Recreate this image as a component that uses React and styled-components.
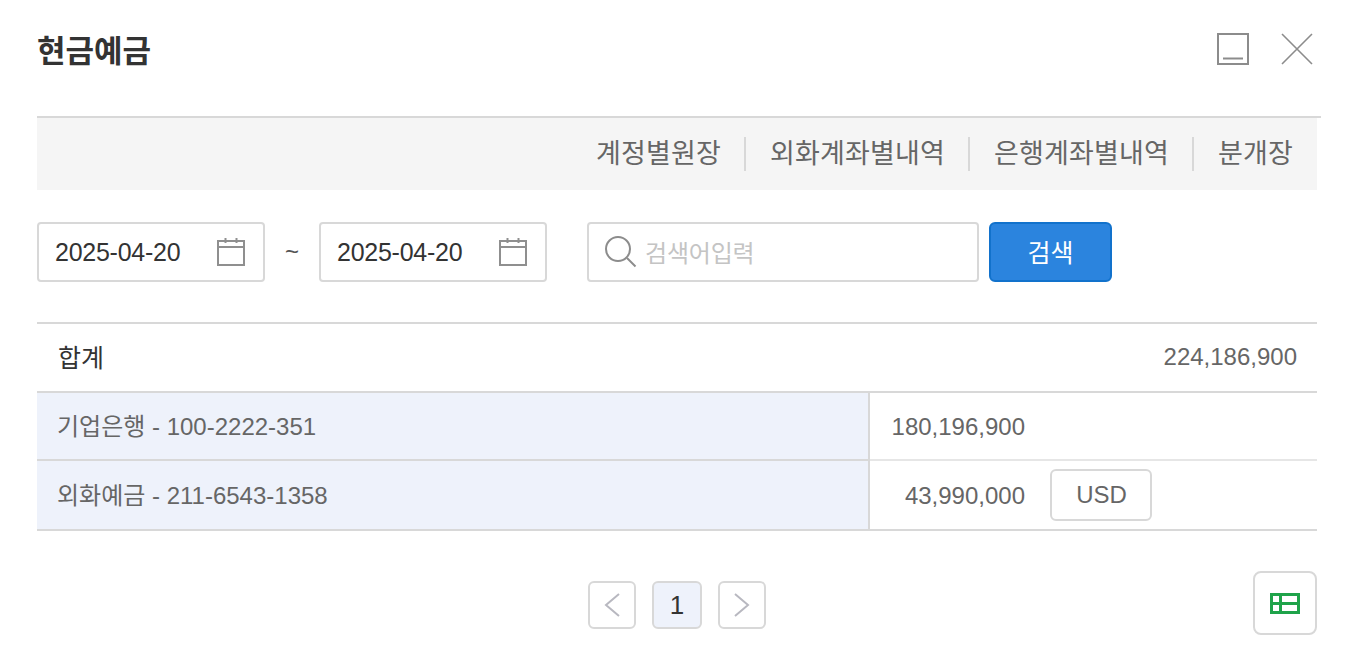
import React from "react";
import styled, { createGlobalStyle } from "styled-components";

const FONT = `"Liberation Sans", "Noto Sans CJK KR", sans-serif`;

const GlobalStyle = createGlobalStyle`
  html, body {
    margin: 0;
    padding: 0;
    background: #fff;
    font-family: ${FONT};
  }
  * { box-sizing: border-box; }
`;

const Page = styled.div`
  width: 1352px;
  height: 658px;
  padding: 0 35px 0 37px;
  overflow: hidden;
`;

const Header = styled.header`
  display: flex;
  align-items: center;
  justify-content: space-between;
  height: 116px;
  padding-bottom: 18px;
`;

const Title = styled.h1`
  margin: 5px 0 0;
  font-size: 31px;
  line-height: 40px;
  font-weight: 700;
  color: #333;
  letter-spacing: 0;
`;

const WindowButtons = styled.div`
  display: flex;
  align-items: center;
  gap: 32px;
  margin-right: 4px;
`;

const TabBar = styled.nav`
  position: relative;
  display: flex;
  align-items: center;
  justify-content: flex-end;
  height: 74px;
  border-top: 2px solid #d8d8d8;
  background: #f5f5f5;
  padding-right: 24px;
  &::before {
    content: "";
    position: absolute;
    top: -2px;
    right: -4px;
    width: 4px;
    height: 2px;
    background: #d8d8d8;
  }
`;

const Tab = styled.span`
  font-size: 27px;
  line-height: 34px;
  color: #666;
  letter-spacing: 0.16px;
  padding: 0 23px 0 24px;
  border-left: ${(p) => (p.$first ? "none" : "2px solid #d8d8d8")};
  &:last-child { padding-right: 0; }
`;

const FilterRow = styled.div`
  display: flex;
  align-items: center;
  margin-top: 32px;
  height: 60px;
`;

const Field = styled.div`
  display: flex;
  align-items: center;
  width: ${(p) => p.$width}px;
  height: 60px;
  border: 2px solid #d8d8d8;
  border-radius: 4px;
  background: #fff;
`;

const DateField = styled(Field)`
  justify-content: space-between;
  padding: 0 17px 0 16px;
`;

const DateValue = styled.span`
  font-size: 25px;
  letter-spacing: -0.25px;
  color: #333;
`;

const Tilde = styled.span`
  width: 54px;
  text-align: center;
  font-size: 24px;
  color: #555;
`;

const SearchField = styled(Field)`
  margin-left: 40px;
  padding-left: 16px;
  gap: 8px;
`;

const Placeholder = styled.span`
  font-size: 24px;
  letter-spacing: -0.2px;
  color: #c4c4c4;
  padding-bottom: 2px;
`;

const SearchButton = styled.button`
  width: 123px;
  height: 60px;
  margin-left: 10px;
  border: 2px solid #1272cc;
  border-radius: 6px;
  background: #2b84de;
  color: #fff;
  font-family: ${FONT};
  font-size: 25px;
  padding: 0 0 2px;
`;

const Table = styled.div`
  margin-top: 40px;
  border-top: 2px solid #d8d8d8;
`;

const TotalRow = styled.div`
  display: flex;
  align-items: center;
  justify-content: space-between;
  height: 69px;
  padding: 0 20px 0 21px;
  border-bottom: 2px solid #d8d8d8;
`;

const TotalLabel = styled.span`
  font-size: 25px;
  color: #333;
  padding-bottom: 4px;
`;

const Amount = styled.span`
  font-size: 24px;
  color: #666;
`;

const TotalAmount = styled(Amount)`
  padding-bottom: 2px;
`;

const Row = styled.div`
  display: flex;
  height: ${(p) => p.$height}px;
  border-bottom: 2px solid ${(p) => (p.$light ? "#e6e6e6" : "#d8d8d8")};
`;

const AccountCell = styled.div`
  display: flex;
  align-items: center;
  width: 833px;
  padding: 0 0 4px 20px;
  background: #eef2fb;
  border-right: 2px solid #d8d8d8;
  font-size: 24px;
  color: #666;
  box-shadow: 0 2px 0 #d8d8d8;
`;

const AmountCell = styled.div`
  display: flex;
  align-items: center;
  flex: 1;
`;

const AmountValue = styled(Amount)`
  width: 155px;
  padding-top: 2px;
  text-align: right;
`;

const CurrencyButton = styled.button`
  width: 102px;
  height: 52px;
  margin-left: 25px;
  border: 2px solid #d8d8d8;
  border-radius: 6px;
  background: #fff;
  color: #666;
  font-family: ${FONT};
  font-size: 24px;
  padding: 0 0 0 1px;
`;

const Footer = styled.div`
  position: relative;
  display: flex;
  justify-content: center;
  gap: 16px;
  margin-top: 50px;
`;

const PageButton = styled.button`
  display: flex;
  align-items: center;
  justify-content: center;
  width: ${(p) => (p.$active ? 50 : 48)}px;
  height: 48px;
  border: 2px solid #d8d8d8;
  border-radius: 6px;
  background: ${(p) => (p.$active ? "#eef2fb" : "#fff")};
  color: #333;
  font-family: ${FONT};
  font-size: 26px;
  padding: 0;
`;

const ExcelButton = styled.button`
  position: absolute;
  right: 0;
  top: -10px;
  display: flex;
  align-items: center;
  justify-content: center;
  width: 64px;
  height: 64px;
  border: 2px solid #d8d8d8;
  border-radius: 8px;
  background: #fff;
  padding: 0;
`;

const MinimizeIcon = () => (
  <svg width="32" height="32" viewBox="0 0 32 32" fill="none" stroke="#8c8c8c" strokeWidth="2">
    <rect x="1" y="1" width="30" height="30" />
    <path d="M6 25.5h20" />
  </svg>
);

const CloseIcon = () => (
  <svg width="32" height="32" viewBox="0 0 32 32" fill="none" stroke="#8c8c8c" strokeWidth="1.6">
    <path d="M1 1l30 30M31 1L1 31" />
  </svg>
);

const CalendarIcon = () => (
  <svg width="30" height="30" viewBox="0 0 30 30" fill="none" stroke="#8f8f8f" strokeWidth="2">
    <rect x="2" y="4" width="26" height="24" />
    <path d="M2 10h26M9.5 1v5M20.5 1v5" />
  </svg>
);

const SearchIcon = () => (
  <svg width="32" height="32" viewBox="0 0 32 32" fill="none" stroke="#8c8c8c" strokeWidth="2">
    <circle cx="13" cy="13" r="12" />
    <path d="M22 22l8.5 8.5" />
  </svg>
);

const ChevronLeft = () => (
  <svg width="16" height="24" viewBox="0 0 16 24" fill="none" stroke="#b8b8c0" strokeWidth="2">
    <path d="M15 1L2 12l13 11" />
  </svg>
);

const ChevronRight = () => (
  <svg width="16" height="24" viewBox="0 0 16 24" fill="none" stroke="#b8b8c0" strokeWidth="2">
    <path d="M1 1l13 11L1 23" />
  </svg>
);

const ExcelIcon = () => (
  <svg width="30" height="21" viewBox="0 0 30 21" fill="none" stroke="#1fa34a" strokeWidth="3">
    <rect x="1.5" y="1.5" width="27" height="18" />
    <path d="M1.5 10.5h27M10.5 1.5v18" />
  </svg>
);

const tabs = ["계정별원장", "외화계좌별내역", "은행계좌별내역", "분개장"];

export default function App() {
  return (
    <Page>
      <GlobalStyle />
      <Header>
        <Title>현금예금</Title>
        <WindowButtons>
          <MinimizeIcon />
          <CloseIcon />
        </WindowButtons>
      </Header>
      <TabBar>
        {tabs.map((t, i) => (
          <Tab key={t} $first={i === 0}>{t}</Tab>
        ))}
      </TabBar>
      <FilterRow>
        <DateField $width={228}>
          <DateValue>2025-04-20</DateValue>
          <CalendarIcon />
        </DateField>
        <Tilde>~</Tilde>
        <DateField $width={228}>
          <DateValue>2025-04-20</DateValue>
          <CalendarIcon />
        </DateField>
        <SearchField $width={392}>
          <SearchIcon />
          <Placeholder>검색어입력</Placeholder>
        </SearchField>
        <SearchButton>검색</SearchButton>
      </FilterRow>
      <Table>
        <TotalRow>
          <TotalLabel>합계</TotalLabel>
          <TotalAmount>224,186,900</TotalAmount>
        </TotalRow>
        <Row $height={68} $light>
          <AccountCell>기업은행 - 100-2222-351</AccountCell>
          <AmountCell>
            <AmountValue>180,196,900</AmountValue>
          </AmountCell>
        </Row>
        <Row $height={70}>
          <AccountCell>외화예금 - 211-6543-1358</AccountCell>
          <AmountCell>
            <AmountValue>43,990,000</AmountValue>
            <CurrencyButton>USD</CurrencyButton>
          </AmountCell>
        </Row>
      </Table>
      <Footer>
        <PageButton aria-label="이전"><ChevronLeft /></PageButton>
        <PageButton $active>1</PageButton>
        <PageButton aria-label="다음"><ChevronRight /></PageButton>
        <ExcelButton aria-label="엑셀"><ExcelIcon /></ExcelButton>
      </Footer>
    </Page>
  );
}
